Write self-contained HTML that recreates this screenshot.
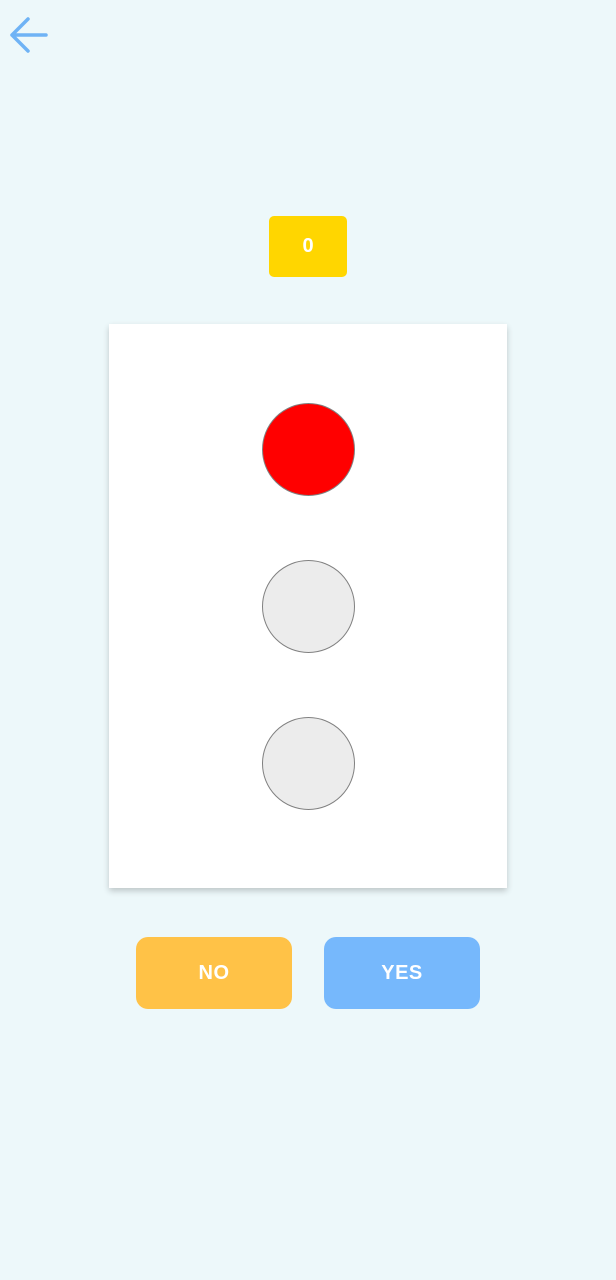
<!DOCTYPE html>
<html><head><style>
body{margin:0;width:616px;height:1280px;background:#edf8fa;font-family:"Liberation Sans",sans-serif;position:relative;overflow:hidden}
.a{position:absolute}
.score{left:269px;top:216px;width:78px;height:61px;background:#ffd600;border-radius:5px;color:#fff;font-weight:bold;font-size:20px;display:flex;align-items:center;justify-content:center}
.card{left:109px;top:324px;width:398px;height:564px;background:#fff;box-shadow:0 3px 6px rgba(0,0,0,.2)}
.c{left:262px;width:91px;height:91px;border-radius:50%;border:1px solid #808080;background:#ececec}
.b{top:937px;width:156px;height:72px;border-radius:12px;color:#fff;font-weight:bold;font-size:20px;display:flex;align-items:center;justify-content:center;letter-spacing:0.5px}
</style></head><body>
<svg class="a" style="left:0;top:0" width="60" height="70"><path d="M46 35H12M28 19L12 35L28 51" stroke="#6fb3f5" stroke-width="3.5" fill="none" stroke-linecap="round" stroke-linejoin="round"/></svg>
<div class="a score">0</div>
<div class="a card"></div>
<div class="a c" style="top:403px;background:#ff0000"></div>
<div class="a c" style="top:560px"></div>
<div class="a c" style="top:717px"></div>
<div class="a b" style="left:136px;background:#ffc247">NO</div>
<div class="a b" style="left:324px;background:#76b8fc">YES</div>
</body></html>
